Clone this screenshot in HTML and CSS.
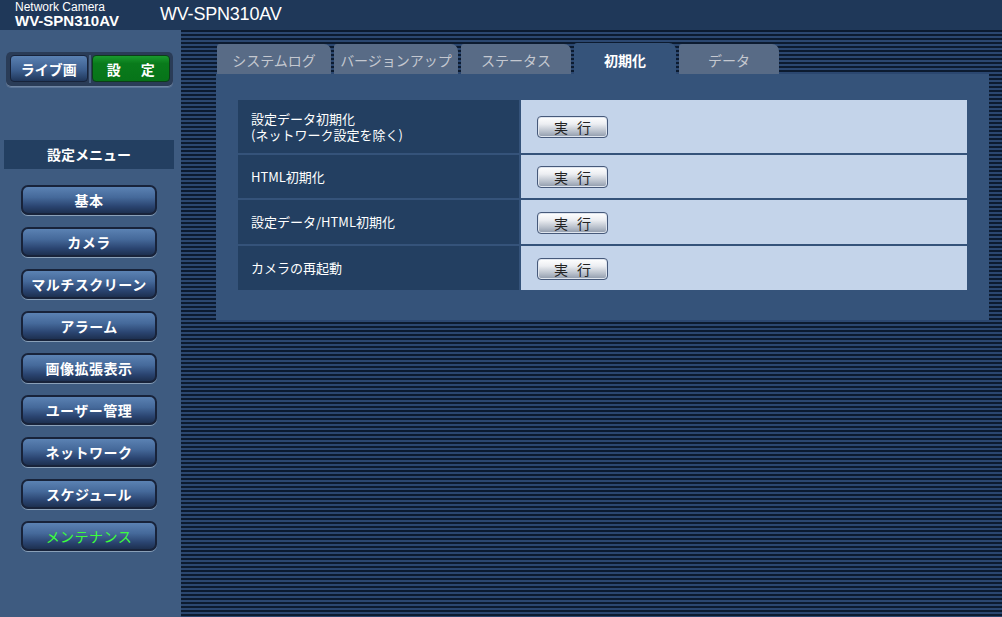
FILE: index.html
```html
<!DOCTYPE html>
<html lang="ja">
<head>
<meta charset="utf-8">
<title>WV-SPN310AV</title>
<link rel="stylesheet" href="styles.css">
</head>
<body>
<div class="page">
  <header class="header">
    <div class="brand">
      <div class="brand-sub">Network Camera</div>
      <div class="brand-model">WV-SPN310AV</div>
    </div>
    <div class="title">WV-SPN310AV</div>
  </header>
  <div class="body">
    <aside class="sidebar">
      <div class="mode-box">
        <div class="mode-btn mode-live">ライブ画</div>
        <div class="mode-sep"></div>
        <div class="mode-btn mode-setup">設 定</div>
      </div>
      <div class="menu-title">設定メニュー</div>
      <nav class="menu">
        <div class="menu-btn">基本</div>
        <div class="menu-btn">カメラ</div>
        <div class="menu-btn">マルチスクリーン</div>
        <div class="menu-btn">アラーム</div>
        <div class="menu-btn">画像拡張表示</div>
        <div class="menu-btn">ユーザー管理</div>
        <div class="menu-btn">ネットワーク</div>
        <div class="menu-btn">スケジュール</div>
        <div class="menu-btn menu-active">メンテナンス</div>
      </nav>
    </aside>
    <main class="main">
      <div class="tabs">
        <div class="tab tab-w1">システムログ</div>
        <div class="tab tab-w2">バージョンアップ</div>
        <div class="tab tab-w3">ステータス</div>
        <div class="tab tab-active tab-w4">初期化</div>
        <div class="tab tab-w5">データ</div>
      </div>
      <section class="panel">
        <div class="table">
          <div class="cell-label row-tall"><div class="label-lines"><div class="line">設定データ初期化</div><div class="line">(ネットワーク設定を除く)</div></div></div>
          <div class="cell-action"><button class="exec">実 行</button></div>
          <div class="cell-label">HTML初期化</div>
          <div class="cell-action"><button class="exec">実 行</button></div>
          <div class="cell-label">設定データ/HTML初期化</div>
          <div class="cell-action"><button class="exec">実 行</button></div>
          <div class="cell-label">カメラの再起動</div>
          <div class="cell-action"><button class="exec">実 行</button></div>
        </div>
      </section>
    </main>
  </div>
</div>
</body>
</html>
```
FILE: styles.css
```css
html, body {
  margin: 0;
  padding: 0;
  width: 1002px;
  height: 617px;
  overflow: hidden;
  font-family: "Noto Sans CJK JP", "Liberation Sans", sans-serif;
}

.page {
  display: flex;
  flex-direction: column;
  width: 1002px;
  height: 617px;
}

.header {
  height: 30px;
  flex: none;
  background: #1f3859;
  color: #fff;
  display: flex;
  align-items: flex-start;
}

.brand {
  padding-left: 15px;
  width: 145px;
  font-family: "Liberation Sans", Arial, sans-serif;
}

.brand-sub {
  font-size: 12px;
  line-height: 12px;
  margin-top: 1px;
}

.brand-model {
  font-size: 15px;
  font-weight: bold;
  line-height: 15px;
}

.title {
  font-family: "Liberation Sans", Arial, sans-serif;
  font-size: 18px;
  line-height: 18px;
  margin-top: 5px;
  letter-spacing: -0.2px;
}

.body {
  flex: 1;
  display: flex;
  min-height: 0;
}

.sidebar {
  width: 181px;
  flex: none;
  background: #3e5b80;
  display: flex;
  flex-direction: column;
  align-items: flex-start;
}

.mode-box {
  margin: 22px 0 0 6px;
  width: 167px;
  height: 35px;
  box-sizing: border-box;
  padding: 3px 3px 4px 4px;
  background: #2a3c57;
  border-radius: 5px;
  box-shadow: inset 0 -1px 0 #6f86a3, 0 1px 0 #5a7396;
  display: flex;
  gap: 1px;
}

.mode-btn {
  height: 27px;
  line-height: 27px;
  text-align: center;
  color: #fff;
  font-size: 14px;
  font-weight: bold;
  border-radius: 4px;
  box-sizing: border-box;
}

.mode-live {
  width: 78px;
  background: linear-gradient(#5a81b2, #3d5f8f 55%, #20375a);
  border: 1px solid #17233a;
}

.mode-sep {
  width: 2px;
  background: #4b6384;
}

.mode-setup {
  width: 79px;
  background: linear-gradient(#1a9a2e, #097b1b 30%, #077419);
  border: 1px solid #0d3d1a;
  word-spacing: 17px;
}

.menu-title {
  margin: 53px 0 0 4px;
  width: 170px;
  height: 29px;
  line-height: 29px;
  background: #233f61;
  color: #fff;
  font-size: 14px;
  font-weight: bold;
  text-align: center;
}

.menu {
  margin: 16px 0 0 21px;
  display: flex;
  flex-direction: column;
  gap: 12px;
}

.menu-btn {
  width: 136px;
  height: 30px;
  box-sizing: border-box;
  border: 2px solid #18233a;
  border-radius: 7px;
  background: linear-gradient(#5b82b3, #45699a 40%, #2a4470 75%, #1d3050);
  box-shadow: 0 1px 0 #8aa0b8;
  color: #fff;
  font-size: 14px;
  font-weight: bold;
  text-align: center;
  line-height: 26px;
  letter-spacing: 0.5px;
}

.menu-active {
  color: #3cff3c;
  font-weight: normal;
}

.main {
  flex: 1;
  background: repeating-linear-gradient(to bottom, #0c1b30 0, #0c1b30 2px, #2b4770 2px, #2b4770 4px);
  padding: 14px 0 0 35px;
  display: flex;
  flex-direction: column;
  align-items: flex-start;
}

.tabs {
  display: flex;
  gap: 3px;
  margin-left: 1px;
  height: 30px;
  align-items: flex-end;
}

.tab {
  height: 30px;
  box-sizing: border-box;
  background: #586b86;
  color: #c4c8d0;
  font-size: 14px;
  text-align: center;
  line-height: 32px;
  border-radius: 3px 7px 0 0;
}

.tab-w1 { width: 114px; }
.tab-w2 { width: 124px; }
.tab-w3 { width: 110px; }
.tab-w4 { width: 102px; }
.tab-w5 { width: 100px; }

.tab-active {
  height: 31px;
  background: #35537a;
  color: #fff;
  font-weight: bold;
  line-height: 34px;
}

.panel {
  width: 773px;
  height: 246px;
  box-sizing: border-box;
  background: #35537a;
  padding: 26px 0 0 22px;
}

.table {
  width: 729px;
  display: grid;
  grid-template-columns: 281px 446px;
  grid-template-rows: 53px 43px 44px 44px;
  gap: 2px;
}

.cell-label {
  background: #233f61;
  color: #fff;
  font-size: 13px;
  line-height: 16px;
  padding-left: 13px;
  display: flex;
  align-items: center;
}

.label-lines {
  display: flex;
  flex-direction: column;
}

.line {
  height: 16px;
  line-height: 16px;
}

.cell-action {
  background: #c4d4ea;
  display: flex;
  align-items: center;
  padding-left: 16px;
}

.exec {
  width: 71px;
  height: 22px;
  box-sizing: border-box;
  border: 1px solid #46597a;
  border-radius: 4px;
  background: linear-gradient(#ffffff, #eceef2 35%, #b4bcc8 75%, #8e99aa);
  box-shadow: inset 0 0 0 1px #dfe5ee;
  color: #222;
  font-family: "Noto Sans CJK JP", sans-serif;
  font-size: 14px;
  line-height: 18px;
  letter-spacing: 3px;
  padding: 0 0 0 3px;
  margin-top: 1px;
}
```
